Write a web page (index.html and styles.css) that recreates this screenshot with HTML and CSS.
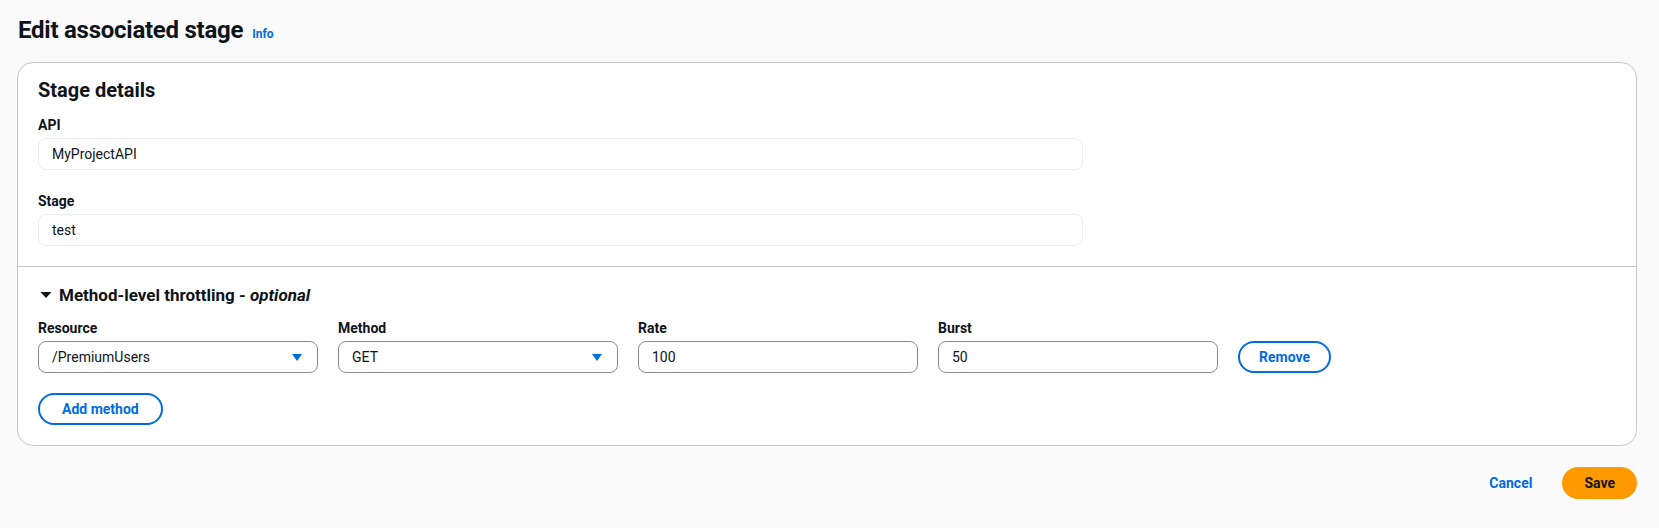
FILE: index.html
```html
<!DOCTYPE html>
<html lang="en">
<head>
<meta charset="utf-8">
<title>Edit associated stage</title>
<link rel="stylesheet" href="styles.css">
</head>
<body>
<div class="page">
  <header class="page-header">
    <h1 class="page-title">Edit associated stage</h1>
    <a class="info-link" href="#">Info</a>
  </header>

  <section class="card">
    <div class="card-section">
      <h2 class="card-title">Stage details</h2>
      <div class="form-grid">
        <div class="field">
          <label class="field-label">API</label>
          <div class="input input-readonly">MyProjectAPI</div>
        </div>
        <div class="field field-spaced">
          <label class="field-label">Stage</label>
          <div class="input input-readonly">test</div>
        </div>
      </div>
    </div>

    <div class="card-section card-section-divided">
      <div class="expand-header">
        <svg class="expand-caret" width="16" height="16" viewBox="0 0 16 16"><polygon points="2.5,5 13.5,5 8,11" fill="#0f141a"/></svg>
        <span class="expand-title">Method-level throttling - <i>optional</i></span>
      </div>

      <div class="throttle-row">
        <div class="field col">
          <label class="field-label">Resource</label>
          <div class="input select">
            <span>/PremiumUsers</span>
            <svg class="select-caret" width="10" height="7" viewBox="0 0 10 7"><polygon points="0,0 10,0 5,7" fill="#006ce0"/></svg>
          </div>
        </div>
        <div class="field col">
          <label class="field-label">Method</label>
          <div class="input select">
            <span>GET</span>
            <svg class="select-caret" width="10" height="7" viewBox="0 0 10 7"><polygon points="0,0 10,0 5,7" fill="#006ce0"/></svg>
          </div>
        </div>
        <div class="field col">
          <label class="field-label">Rate</label>
          <div class="input">100</div>
        </div>
        <div class="field col">
          <label class="field-label">Burst</label>
          <div class="input">50</div>
        </div>
        <button class="btn btn-normal">Remove</button>
      </div>

      <button class="btn btn-normal add-btn">Add method</button>
    </div>
  </section>

  <footer class="actions">
    <button class="btn btn-link">Cancel</button>
    <button class="btn btn-primary">Save</button>
  </footer>
</div>
</body>
</html>
```

FILE: styles.css
```css
* {
  box-sizing: border-box;
}

html, body {
  margin: 0;
  background: #fafafa;
}

body {
  font-family: Roboto, "Open Sans", Arial, sans-serif;
  color: #0f141a;
  font-size: 14px;
  line-height: 18px;
}

.page {
  padding: 15px 22px 0 17px;
}

.page-header {
  display: flex;
  align-items: baseline;
  gap: 9px;
  padding-left: 1px;
}

.page-title {
  margin: 0;
  font-size: 24px;
  line-height: 30px;
  font-weight: 700;
  letter-spacing: -0.25px;
  color: #0f141a;
}

.info-link {
  font-size: 12px;
  font-weight: 700;
  color: #006ce0;
  text-decoration: none;
}

.card {
  margin-top: 17px;
  background: #ffffff;
  border: 1px solid #c6c6cd;
  border-radius: 16px;
}

.card-section {
  padding: 15px 20px 20px;
}

.card-section-divided {
  border-top: 1px solid #c6c6cd;
  padding-top: 17px;
}

.card-title {
  margin: 0;
  font-size: 20px;
  line-height: 24px;
  font-weight: 700;
}

.form-grid {
  display: grid;
  grid-template-columns: repeat(12, 1fr);
  column-gap: 20px;
  margin-top: 14px;
}

.form-grid .field {
  grid-column: span 8;
}

.field {
  display: flex;
  flex-direction: column;
  gap: 4px;
}

.field-spaced {
  margin-top: 22px;
}

.field-label {
  font-size: 14px;
  line-height: 18px;
  font-weight: 700;
}

.input {
  height: 32px;
  display: flex;
  align-items: center;
  padding: 0 13px;
  border: 1px solid #8c8c94;
  border-radius: 8px;
  background: #ffffff;
  font-size: 14px;
  color: #0f141a;
}

.input-readonly {
  border-color: #e9ebed;
}

.select {
  justify-content: space-between;
  padding-right: 15px;
}

.select-caret {
  display: block;
}

.expand-header {
  display: flex;
  align-items: center;
  gap: 5px;
  height: 22px;
}

.expand-caret {
  display: block;
  flex: none;
}

.expand-title {
  font-size: 17px;
  line-height: 22px;
  font-weight: 700;
}

.throttle-row {
  display: flex;
  align-items: flex-end;
  gap: 20px;
  margin-top: 13px;
}

.col {
  width: 280px;
  flex: none;
}

.btn {
  font-family: inherit;
  font-size: 14px;
  font-weight: 700;
  line-height: 18px;
  height: 32px;
  padding: 0 20px;
  border-radius: 20px;
  border: 2px solid transparent;
  background: transparent;
  cursor: pointer;
}

.btn-normal {
  border-color: #006ce0;
  color: #006ce0;
  background: #ffffff;
}

.throttle-row .btn-normal {
  padding: 0 19px;
}

.add-btn {
  display: block;
  margin-top: 20px;
  padding: 0 22px;
}

.actions {
  display: flex;
  justify-content: flex-end;
  gap: 8px;
  margin-top: 21px;
}

.btn-link {
  color: #006ce0;
}

.btn-primary {
  background: #ff9900;
  border-color: #ff9900;
  color: #0f141a;
}
```
